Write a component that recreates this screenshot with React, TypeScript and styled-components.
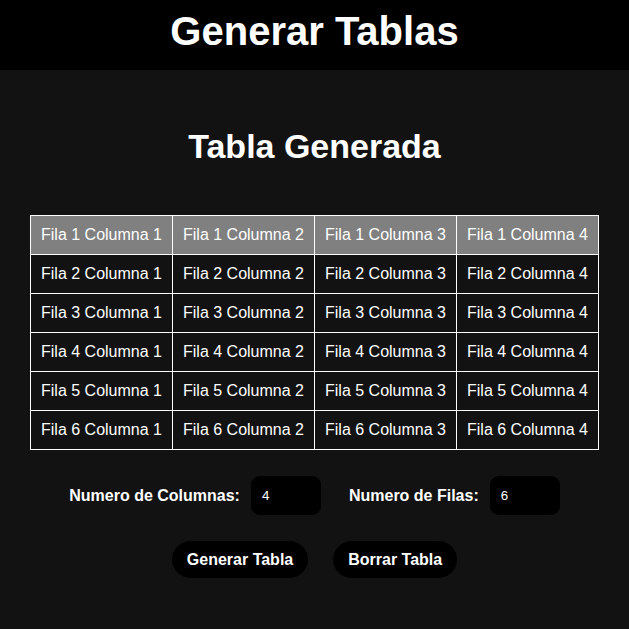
import React, { useState } from "react";
import styled, { createGlobalStyle } from "styled-components";

const GlobalStyle = createGlobalStyle`
  html, body {
    margin: 0;
    padding: 0;
    background: #121212;
    color: #ffffff;
    font-family: "Liberation Sans", Arial, sans-serif;
  }
  * { box-sizing: border-box; }
`;

const Header = styled.header`
  height: 70px;
  background: #000000;
  display: flex;
  justify-content: center;
  padding-top: 8px;
`;

const Title = styled.h1`
  margin: 0;
  font-family: "Liberation Sans", Arial, sans-serif;
  font-weight: 700;
  font-size: 40px;
  line-height: 46px;
`;

const Main = styled.main`
  display: flex;
  flex-direction: column;
  align-items: center;
  padding: 0 30px;
`;

const Subtitle = styled.h2`
  margin: 57px 0 49px;
  font-family: "Liberation Sans", Arial, sans-serif;
  font-weight: 700;
  font-size: 34px;
  line-height: 39px;
`;

const Table = styled.table`
  width: 100%;
  border-collapse: collapse;
`;

const Cell = styled.td<{ $head?: boolean }>`
  border: 1px solid #ffffff;
  padding: 10px;
  font-size: 16px;
  line-height: 18px;
  text-align: left;
  white-space: nowrap;
  background: ${(p) => (p.$head ? "#808080" : "#121212")};
  color: #ffffff;
`;

const Controls = styled.div`
  display: flex;
  align-items: center;
  margin-top: 26px;
`;

const Field = styled.label<{ $last?: boolean }>`
  display: flex;
  align-items: center;
  gap: 11px;
  margin-right: ${(p) => (p.$last ? "0" : "28px")};
  font-size: 16px;
  font-weight: 700;
`;

const NumberInput = styled.input`
  width: 70px;
  height: 39px;
  padding: 0 10px 0 11px;
  border: none;
  border-radius: 9px;
  background: #000000;
  color: #ffffff;
  font-family: "Liberation Sans", Arial, sans-serif;
  font-size: 13.33px;
  outline: none;
`;

const Buttons = styled.div`
  display: flex;
  gap: 25px;
  margin-top: 26px;
`;

const Button = styled.button`
  padding: 9px 15px;
  line-height: 19px;
  border: none;
  border-radius: 19px;
  background: #000000;
  color: #ffffff;
  font-family: "Liberation Sans", Arial, sans-serif;
  font-size: 16px;
  font-weight: 700;
  cursor: pointer;
`;

export default function App() {
  const [cols, setCols] = useState("4");
  const [rows, setRows] = useState("6");
  const [shown, setShown] = useState({ c: 4, r: 6 });

  const r = Array.from({ length: shown.r }, (_, i) => i + 1);
  const c = Array.from({ length: shown.c }, (_, i) => i + 1);

  return (
    <>
      <GlobalStyle />
      <Header>
        <Title>Generar Tablas</Title>
      </Header>
      <Main>
        <Subtitle>Tabla Generada</Subtitle>
        <Table>
          <tbody>
            {r.map((ri) => (
              <tr key={ri}>
                {c.map((ci) => (
                  <Cell key={ci} $head={ri === 1}>
                    Fila {ri} Columna {ci}
                  </Cell>
                ))}
              </tr>
            ))}
          </tbody>
        </Table>
        <Controls>
          <Field>
            Numero de Columnas:
            <NumberInput value={cols} onChange={(e) => setCols(e.target.value)} />
          </Field>
          <Field $last>
            Numero de Filas:
            <NumberInput value={rows} onChange={(e) => setRows(e.target.value)} />
          </Field>
        </Controls>
        <Buttons>
          <Button onClick={() => setShown({ c: Number(cols) || 0, r: Number(rows) || 0 })}>
            Generar Tabla
          </Button>
          <Button onClick={() => setShown({ c: 0, r: 0 })}>Borrar Tabla</Button>
        </Buttons>
      </Main>
    </>
  );
}
